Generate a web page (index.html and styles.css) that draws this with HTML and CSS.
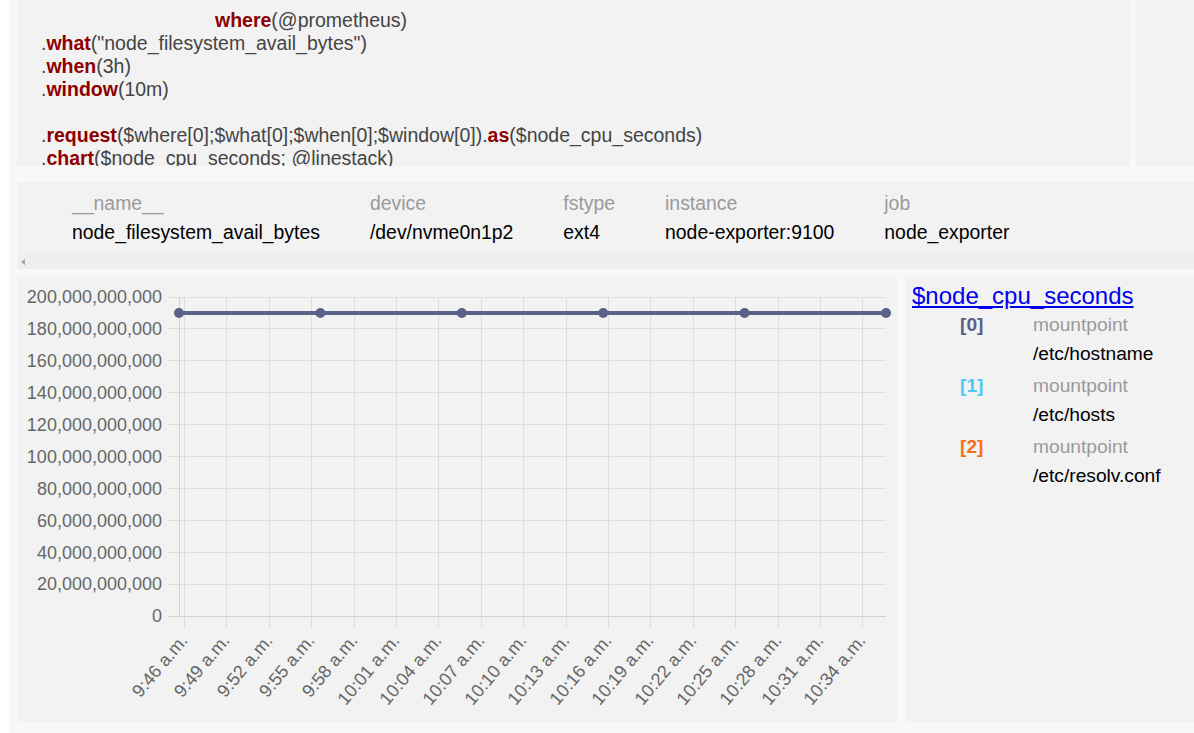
FILE: index.html
```html
<!DOCTYPE html>
<html>
<head>
<meta charset="utf-8">
<link rel="stylesheet" href="styles.css">
</head>
<body>
<div class="page">
  <div class="top">
    <div class="code"><div class="line first"><span class="k">where</span>(@prometheus)</div><div class="line">.<span class="k">what</span>("node_filesystem_avail_bytes")</div><div class="line">.<span class="k">when</span>(3h)</div><div class="line">.<span class="k">window</span>(10m)</div><div class="line"> </div><div class="line">.<span class="k">request</span>($where[0];$what[0];$when[0];$window[0]).<span class="k">as</span>($node_cpu_seconds)</div><div class="line">.<span class="k">chart</span>($node_cpu_seconds; @linestack)</div></div>
    <div class="side"></div>
  </div>

  <div class="labels">
    <div class="labels-inner">
      <table class="ltable">
        <tr class="head"><td>__name__</td><td>device</td><td>fstype</td><td>instance</td><td>job</td></tr>
        <tr><td>node_filesystem_avail_bytes</td><td>/dev/nvme0n1p2</td><td>ext4</td><td>node-exporter:9100</td><td>node_exporter</td></tr>
      </table>
    </div>
    <div class="hscroll"><span class="arrow"></span></div>
  </div>

  <div class="bottom">
    <div class="chart">
      <svg class="plot" width="880" height="445" viewBox="0 0 880 445">
        <g class="grid">
          <line x1="151" y1="20.5" x2="869" y2="20.5"/>
          <line x1="151" y1="51.5" x2="869" y2="51.5"/>
          <line x1="151" y1="83.5" x2="869" y2="83.5"/>
          <line x1="151" y1="115.5" x2="869" y2="115.5"/>
          <line x1="151" y1="147.5" x2="869" y2="147.5"/>
          <line x1="151" y1="179.5" x2="869" y2="179.5"/>
          <line x1="151" y1="211.5" x2="869" y2="211.5"/>
          <line x1="151" y1="243.5" x2="869" y2="243.5"/>
          <line x1="151" y1="275.5" x2="869" y2="275.5"/>
          <line x1="151" y1="307.5" x2="869" y2="307.5"/>
          <line class="zero" x1="151" y1="339.5" x2="869" y2="339.5"/>
          <line class="zero" x1="162.5" y1="20" x2="162.5" y2="340"/>
          <line x1="167.5" y1="20" x2="167.5" y2="351"/>
          <line x1="209.5" y1="20" x2="209.5" y2="351"/>
          <line x1="252.5" y1="20" x2="252.5" y2="351"/>
          <line x1="294.5" y1="20" x2="294.5" y2="351"/>
          <line x1="337.5" y1="20" x2="337.5" y2="351"/>
          <line x1="379.5" y1="20" x2="379.5" y2="351"/>
          <line x1="421.5" y1="20" x2="421.5" y2="351"/>
          <line x1="464.5" y1="20" x2="464.5" y2="351"/>
          <line x1="506.5" y1="20" x2="506.5" y2="351"/>
          <line x1="549.5" y1="20" x2="549.5" y2="351"/>
          <line x1="591.5" y1="20" x2="591.5" y2="351"/>
          <line x1="633.5" y1="20" x2="633.5" y2="351"/>
          <line x1="676.5" y1="20" x2="676.5" y2="351"/>
          <line x1="718.5" y1="20" x2="718.5" y2="351"/>
          <line x1="761.5" y1="20" x2="761.5" y2="351"/>
          <line x1="803.5" y1="20" x2="803.5" y2="351"/>
          <line x1="845.5" y1="20" x2="845.5" y2="351"/>
        </g>
        <g class="ylab">
          <text x="145" y="20" dy="0.35em">200,000,000,000</text>
          <text x="145" y="51.9" dy="0.35em">180,000,000,000</text>
          <text x="145" y="83.8" dy="0.35em">160,000,000,000</text>
          <text x="145" y="115.7" dy="0.35em">140,000,000,000</text>
          <text x="145" y="147.6" dy="0.35em">120,000,000,000</text>
          <text x="145" y="179.5" dy="0.35em">100,000,000,000</text>
          <text x="145" y="211.4" dy="0.35em">80,000,000,000</text>
          <text x="145" y="243.3" dy="0.35em">60,000,000,000</text>
          <text x="145" y="275.2" dy="0.35em">40,000,000,000</text>
          <text x="145" y="307.1" dy="0.35em">20,000,000,000</text>
          <text x="145" y="339" dy="0.35em">0</text>
        </g>
        <g class="xlab">
          <text transform="translate(171.5 364) rotate(-50)">9:46 a.m.</text>
          <text transform="translate(213.5 364) rotate(-50)">9:49 a.m.</text>
          <text transform="translate(256.5 364) rotate(-50)">9:52 a.m.</text>
          <text transform="translate(298.5 364) rotate(-50)">9:55 a.m.</text>
          <text transform="translate(341.5 364) rotate(-50)">9:58 a.m.</text>
          <text transform="translate(383.5 364) rotate(-50)">10:01 a.m.</text>
          <text transform="translate(425.5 364) rotate(-50)">10:04 a.m.</text>
          <text transform="translate(468.5 364) rotate(-50)">10:07 a.m.</text>
          <text transform="translate(510.5 364) rotate(-50)">10:10 a.m.</text>
          <text transform="translate(553.5 364) rotate(-50)">10:13 a.m.</text>
          <text transform="translate(595.5 364) rotate(-50)">10:16 a.m.</text>
          <text transform="translate(637.5 364) rotate(-50)">10:19 a.m.</text>
          <text transform="translate(680.5 364) rotate(-50)">10:22 a.m.</text>
          <text transform="translate(722.5 364) rotate(-50)">10:25 a.m.</text>
          <text transform="translate(765.5 364) rotate(-50)">10:28 a.m.</text>
          <text transform="translate(807.5 364) rotate(-50)">10:31 a.m.</text>
          <text transform="translate(849.5 364) rotate(-50)">10:34 a.m.</text>
        </g>
        <g class="series">
          <polyline points="162,36 303.4,36 444.8,36 586.2,36 727.6,36 869,36"/>
          <circle cx="162" cy="36" r="5"/>
          <circle cx="303.4" cy="36" r="5"/>
          <circle cx="444.8" cy="36" r="5"/>
          <circle cx="586.2" cy="36" r="5"/>
          <circle cx="727.6" cy="36" r="5"/>
          <circle cx="869" cy="36" r="5"/>
        </g>
      </svg>
    </div>
    <div class="legend">
      <a class="ltitle" href="#">$node_cpu_seconds</a>
      <div class="entry">
        <span class="idx c0">[0]</span><span class="key">mountpoint</span>
        <span></span><span class="val">/etc/hostname</span>
      </div>
      <div class="entry">
        <span class="idx c1">[1]</span><span class="key">mountpoint</span>
        <span></span><span class="val">/etc/hosts</span>
      </div>
      <div class="entry">
        <span class="idx c2">[2]</span><span class="key">mountpoint</span>
        <span></span><span class="val">/etc/resolv.conf</span>
      </div>
    </div>
  </div>
</div>
</body>
</html>
```
FILE: styles.css
```css
html, body {
  margin: 0;
  padding: 0;
}
body {
  background: #ffffff;
  font-family: "Liberation Sans", Arial, sans-serif;
  overflow: hidden;
  width: 1194px;
  height: 733px;
}
.page {
  margin-left: 9px;
  padding-left: 8px;
  background: #f8f8f8;
  height: 733px;
  display: flex;
  flex-direction: column;
}
.top {
  display: flex;
  gap: 6px;
  height: 166px;
  flex: none;
}
.code {
  width: 1113px;
  flex: none;
  box-sizing: border-box;
  background: #f2f2f2;
  overflow: hidden;
  padding: 9px 0 0 24px;
  font-size: 19.5px;
  line-height: 23px;
  color: #444444;
  white-space: pre;
}
.code .first {
  padding-left: 174px;
}
.code .k {
  color: #8e0000;
  font-weight: bold;
}
.side {
  flex: 1;
  background: #f2f2f2;
}
.labels {
  margin-top: 16px;
  height: 87px;
  background: #f2f2f2;
  display: flex;
  flex-direction: column;
  flex: none;
}
.labels-inner {
  flex: 1;
  padding: 6px 0 0 30px;
}
.ltable {
  border-collapse: collapse;
  font-size: 19.4px;
  line-height: 22px;
  color: #000;
}
.ltable td {
  padding: 3.5px 25px;
  white-space: nowrap;
}
.ltable .head td {
  color: #9a9a9a;
}
.hscroll {
  height: 15px;
  background: #efefef;
  display: flex;
  align-items: center;
  padding-left: 4px;
}
.arrow {
  width: 0;
  height: 0;
  border-top: 3.5px solid transparent;
  border-bottom: 3.5px solid transparent;
  border-right: 4px solid #a3a3a3;
}
.bottom {
  margin-top: 8px;
  height: 445px;
  display: flex;
  gap: 8px;
  flex: none;
}
.chart {
  width: 880px;
  flex: none;
  background: #f2f2f2;
  border-radius: 4px;
}
.plot {
  display: block;
  font-family: "Liberation Sans", Arial, sans-serif;
}
.grid line {
  stroke: #dddddd;
  stroke-width: 1;
}
.grid line.zero {
  stroke: #d2d2d2;
}
.ylab text {
  font-size: 18px;
  fill: #666666;
  text-anchor: end;
}
.xlab text {
  font-size: 18px;
  fill: #666666;
  text-anchor: end;
}
.series polyline {
  fill: none;
  stroke: #5b6088;
  stroke-width: 4;
}
.series circle {
  fill: #5b6088;
}
.legend {
  flex: 1;
  background: #f2f2f2;
  border-radius: 4px 0 0 4px;
  padding: 5px 0 0 7px;
  font-size: 19.2px;
  line-height: 22px;
}
.ltitle {
  display: block;
  font-size: 24px;
  line-height: 28px;
  color: #0000ee;
  text-decoration: underline;
  margin-bottom: 0.5px;
}
.entry {
  display: grid;
  grid-template-columns: 73px auto;
  margin-left: 48px;
  margin-bottom: 3px;
}
.entry span {
  padding: 3.5px 0;
}
.idx {
  font-weight: bold;
}
.c0 { color: #5b6088; }
.c1 { color: #4dc9f6; }
.c2 { color: #f67019; }
.key {
  color: #9a9a9a;
}
.val {
  color: #000;
}
```
